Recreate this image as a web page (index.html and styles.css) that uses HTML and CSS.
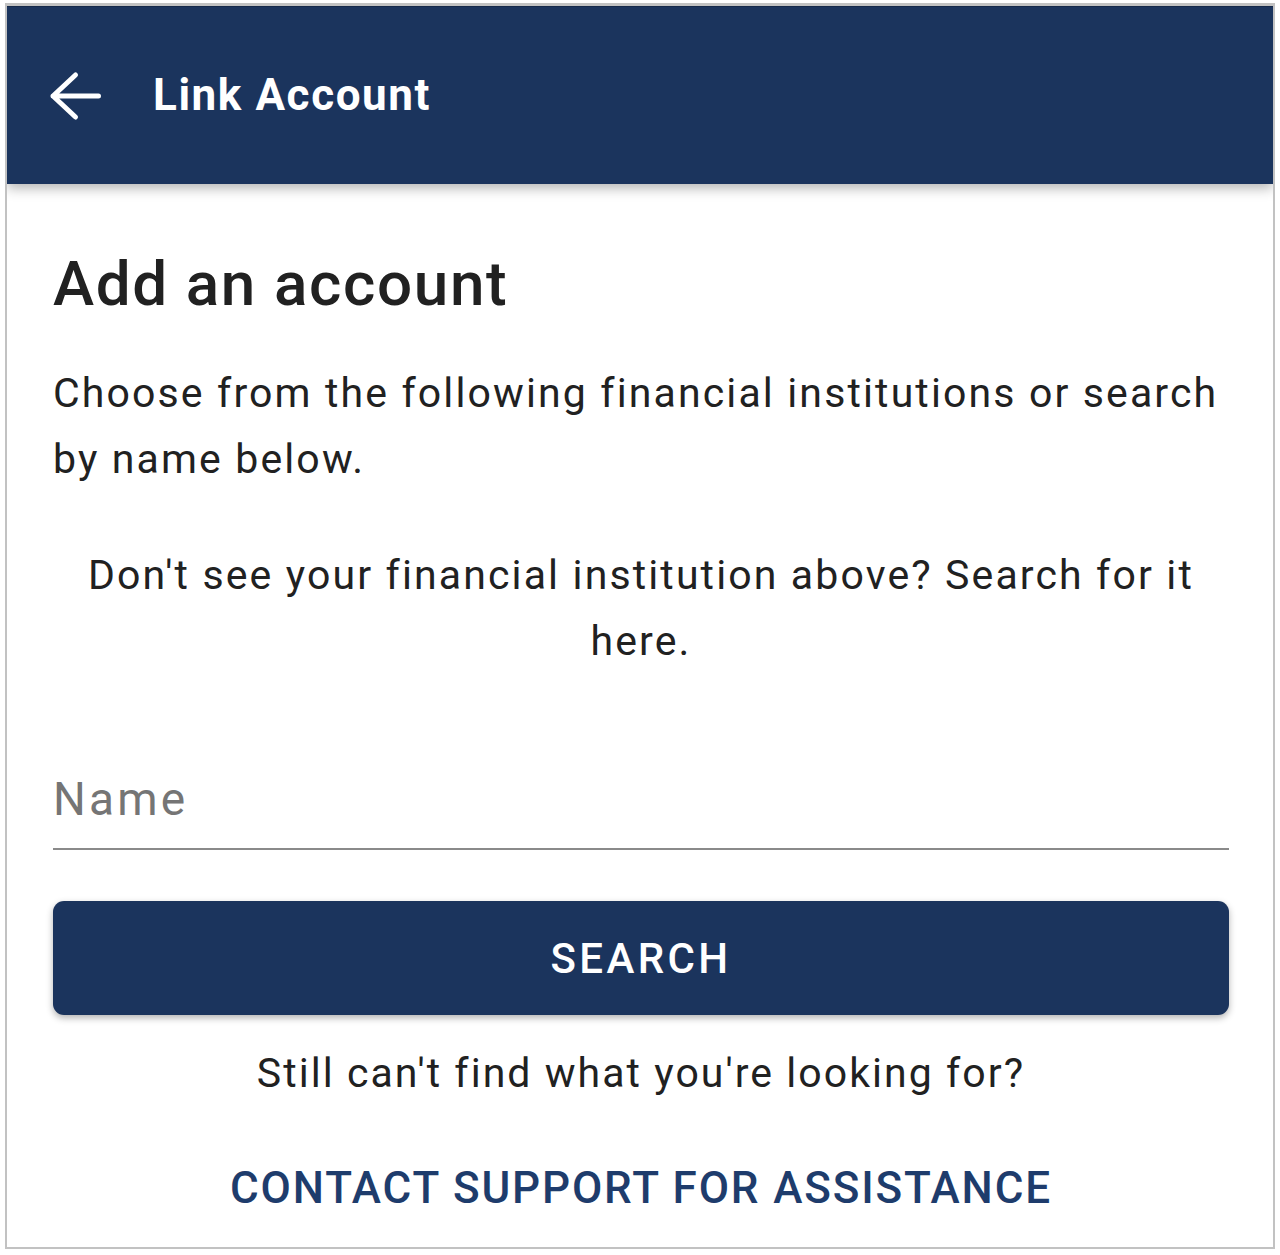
FILE: index.html
```html
<!DOCTYPE html>
<html lang="en">
<head>
<meta charset="utf-8">
<title>Link Account</title>
<link rel="stylesheet" href="styles.css">
</head>
<body>
<div class="frame">
  <header class="topbar">
    <svg class="back" width="56" height="52" viewBox="0 0 56 52" aria-hidden="true">
      <path d="M51.5 26 H6 M28.5 5 L6 26 L28.5 47" fill="none" stroke="#ffffff" stroke-width="5" stroke-linecap="round" stroke-linejoin="round"/>
    </svg>
    <h1 class="title">Link Account</h1>
  </header>
  <main class="content">
    <h2 class="heading">Add an account</h2>
    <p class="intro">Choose from the following financial institutions or search by name below.</p>
    <p class="hint">Don't see your financial institution above? Search for it here.</p>
    <input class="name-field" type="text" placeholder="Name">
    <button class="search-btn" type="button">SEARCH</button>
    <p class="still">Still can't find what you're looking for?</p>
    <a class="support" href="#">CONTACT SUPPORT FOR ASSISTANCE</a>
  </main>
</div>
</body>
</html>
```
FILE: styles.css
```css
html, body {
  margin: 0;
  padding: 0;
  background: #ffffff;
}
body {
  padding: 3px 5px 0 5px;
  font-family: Roboto, "Liberation Sans", sans-serif;
  color: #212121;
}
.frame {
  box-sizing: border-box;
  width: 1270px;
  height: 1246px;
  border: 2px solid #c2c2c2;
  border-top-width: 3px;
  background: #ffffff;
  overflow: hidden;
}
.topbar {
  position: relative;
  z-index: 1;
  height: 178px;
  background: #1b345d;
  border-top: 1px solid #15294a;
  box-sizing: border-box;
  display: flex;
  align-items: center;
  padding-left: 40px;
  box-shadow: 0 4px 12px rgba(0, 0, 0, 0.3);
}
.back {
  display: block;
}
.title {
  margin: 0 0 0 50px;
  font-size: 44px;
  font-weight: 700;
  letter-spacing: 0.036em;
  color: #ffffff;
  line-height: 1.2;
}
.content {
  display: flex;
  flex-direction: column;
  padding: 63px 44px 0 46px;
}
.heading {
  margin: 0;
  font-size: 62px;
  font-weight: 500;
  letter-spacing: 0.026em;
  line-height: 74px;
  color: #212121;
}
.intro {
  margin: 39px 0 0 0;
  font-size: 41px;
  line-height: 66px;
  letter-spacing: 0.052em;
}
.hint {
  margin: 50px 0 0 0;
  font-size: 41px;
  line-height: 66px;
  letter-spacing: 0.052em;
  text-align: center;
}
.name-field {
  margin-top: 95px;
  box-sizing: content-box;
  height: 60px;
  padding: 0 0 19px 0;
  border: none;
  border-bottom: 2px solid #8a8a8a;
  font-family: Roboto, "Liberation Sans", sans-serif;
  font-size: 46px;
  letter-spacing: 0.07em;
  line-height: 60px;
  color: #212121;
  background: transparent;
  outline: none;
}
.name-field::placeholder {
  color: #757575;
}
.search-btn {
  margin-top: 51px;
  height: 114px;
  border: none;
  border-radius: 11px;
  background: #1b345d;
  color: #ffffff;
  font-family: Roboto, "Liberation Sans", sans-serif;
  font-size: 42px;
  font-weight: 500;
  letter-spacing: 0.08em;
  box-shadow: 0 3px 7px rgba(0, 0, 0, 0.3);
}
.still {
  margin: 25px 0 0 0;
  font-size: 41px;
  line-height: 66px;
  letter-spacing: 0.05em;
  text-align: center;
}
.support {
  margin-top: 49px;
  font-size: 44px;
  font-weight: 500;
  line-height: 66px;
  letter-spacing: 0.042em;
  color: #1e3c6c;
  text-align: center;
  text-decoration: none;
}
```
